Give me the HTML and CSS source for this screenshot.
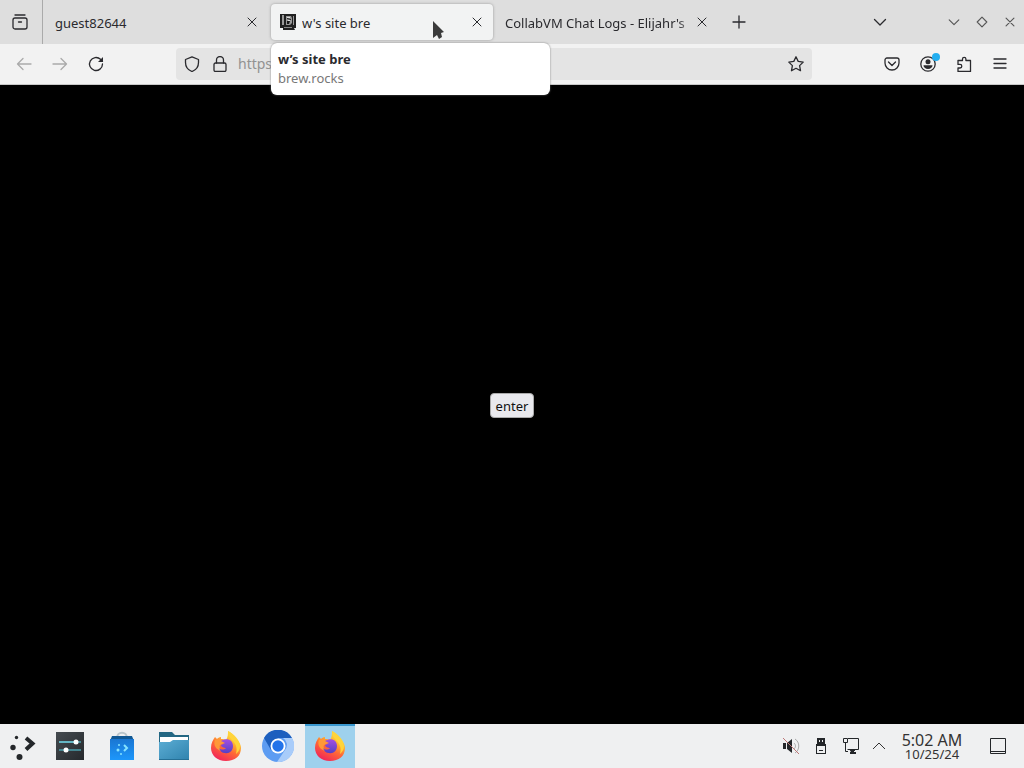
FILE: index.html
```html
<!DOCTYPE html>
<html lang="en">
<head>
<meta charset="utf-8">
<title>w's site bre</title>
<link rel="stylesheet" href="styles.css">
</head>
<body>
<svg class="defs" aria-hidden="true">
  <defs>
    <linearGradient id="flame" x1="0.8" y1="0" x2="0.25" y2="1">
      <stop offset="0" stop-color="#fff04a"/><stop offset="0.3" stop-color="#ffbd30"/><stop offset="0.58" stop-color="#ff6a35"/><stop offset="1" stop-color="#f0205c"/>
    </linearGradient>
    <linearGradient id="globe" x1="0" y1="0" x2="0" y2="1"><stop offset="0" stop-color="#a54fe0"/><stop offset="1" stop-color="#5440c4"/></linearGradient>
    <linearGradient id="bag" x1="0" y1="0" x2="0" y2="1"><stop offset="0" stop-color="#1a76d2"/><stop offset="1" stop-color="#1d97fb"/></linearGradient>
    <linearGradient id="folder" x1="0" y1="0" x2="1" y2="1"><stop offset="0" stop-color="#5cadd4"/><stop offset="1" stop-color="#2f83ae"/></linearGradient>
    <linearGradient id="slate" x1="0" y1="0" x2="1" y2="1"><stop offset="0" stop-color="#454b50"/><stop offset="1" stop-color="#25292d"/></linearGradient>
    <symbol id="firefox" viewBox="0 0 32 32">
      <path fill="url(#flame)" d="M18 1c4 2 5 4 6 7 4 2 7 6 7 10 0 8-6 13-15 13S1 25 1 18c0-5 2-8 4-11l2 2c1-1 2-2 4-2v2c2 0 4 0 5 1 2-3 2-6 2-9z"/>
      <path fill="#ff9838" d="M5 10c4-2 8 0 10 2l-5 3c-1 2 0 4 2 6-6-1-9-6-7-11z"/>
      <path fill="url(#globe)" d="M11 11c6-4 12-1 12 5 0 5-4 8-8 7-3 0-5-2-6-5 2 2 5 2 7 0-2 0-5-1-5-3l4-2z"/>
      <path fill="#ffd43a" d="M18 1c6 3 12 9 12 15 0 4-2 6-4 8 2-7-1-11-4-14-3-3-4-5-4-9z"/>
    </symbol>
    <symbol id="close" viewBox="0 0 16 16"><path d="M4 4l8 8M12 4l-8 8"/></symbol>
    <symbol id="chevron" viewBox="0 0 16 16"><path d="M2.500 5.500L8 11l5.500-5.500"/></symbol>
  </defs>
</svg>
<div class="desktop">
  <header class="tabbar">
    <button class="recent" aria-label="Firefox View"><svg class="icon" viewBox="0 0 16 16"><rect x="1" y="4" width="14" height="11" rx="2"/><path d="M3 1h10M6.500 8h3"/></svg></button>
    <div class="tabs" role="tablist">
      <div class="tab" role="tab" aria-selected="false"><span class="title">guest82644</span><button class="close" aria-label="Close guest82644"><svg class="icon"><use href="#close"/></svg></button></div>
      <div class="tab selected" role="tab" aria-selected="true">
        <svg class="favicon" viewBox="0 0 16 16"><path fill="#202020" d="M0 0h16v14h-2l1 2H3v-2H0z"/><path fill="#999" d="M2 1h2v10H2zM13 2h1v9h-1zM6 2h5l1 2v5l-2 2H6z"/><path fill="#181818" d="M7 4l4 1v1L7 5zM7 7h3l-1 3H7z"/><path fill="#ddd" d="M7 3h3v1H7zM8 6h2v1H8z"/><path fill="#888" d="M4 13h8v1H4z"/></svg>
        <span class="title">w's site bre</span><button class="close" aria-label="Close w's site bre"><svg class="icon"><use href="#close"/></svg></button>
        <div class="tooltip" role="tooltip"><strong>w’s site bre</strong><span>brew.rocks</span></div>
        <svg class="pointer" viewBox="0 0 12 20" aria-hidden="true"><path d="M1 1v17l4-3 2 4 3-2-1-4 3-1z"/></svg>
      </div>
      <div class="tab" role="tab" aria-selected="false"><span class="title fade">CollabVM Chat Logs - Elijahr's</span><button class="close" aria-label="Close CollabVM Chat Logs"><svg class="icon"><use href="#close"/></svg></button></div>
    </div>
    <button class="tool" aria-label="New tab"><svg class="icon" viewBox="0 0 16 16"><path d="M8 2v12M2 8h12"/></svg></button>
    <button class="tool listtabs" aria-label="List all tabs"><svg class="icon"><use href="#chevron"/></svg></button>
    <div class="windowbuttons">
      <button aria-label="Minimize"><svg class="icon" viewBox="0 0 16 16"><use href="#chevron"/></svg></button>
      <button aria-label="Maximize"><svg class="icon" viewBox="0 0 16 16"><path d="M8 2.500L13.500 8 8 13.500 2.500 8z"/></svg></button>
      <button aria-label="Close window"><svg class="icon" viewBox="0 0 16 16"><path d="M3.500 3.500l9 9M12.500 3.500l-9 9"/></svg></button>
    </div>
  </header>
  <nav class="toolbar" aria-label="Navigation">
    <button class="tool" disabled aria-label="Back"><svg class="icon" viewBox="0 0 16 16"><path d="M15 8H1.500M7 2.500L1.500 8 7 13.500"/></svg></button>
    <button class="tool" disabled aria-label="Forward"><svg class="icon" viewBox="0 0 16 16"><path d="M1 8h13.500M9 2.500L14.500 8 9 13.500"/></svg></button>
    <button class="tool" aria-label="Reload"><svg class="icon" viewBox="0 0 16 16"><path d="M14.500 8a6.500 6.500 0 1 1-2-4.700l2 2"/><path class="solid" d="M15 1v5h-5z"/></svg></button>
    <div class="urlbar">
      <button aria-label="Tracking protection"><svg class="icon" viewBox="0 0 16 16"><path d="M8 .800l6.500 2.700v3C14.500 11 12 14 8 15.500 4 14 1.500 11 1.500 6.500v-3z"/></svg></button>
      <button aria-label="Site security"><svg class="icon" viewBox="0 0 16 16"><rect x="2" y="7" width="12" height="8.500" rx="1.500"/><path d="M4.500 7V4a3.500 3.500 0 0 1 7 0v3"/></svg></button>
      <input type="text" value="https://brew.rocks" aria-label="Address">
      <button aria-label="Bookmark this page"><svg class="icon" viewBox="0 0 16 16"><path d="M8 .800l2.200 4.600 5 .700-3.600 3.500.900 5.100L8 12.300l-4.500 2.400.900-5.100L.800 6.100l5-.700z"/></svg></button>
    </div>
    <button class="tool" aria-label="Save to Pocket"><svg class="icon" viewBox="0 0 16 16"><path d="M3 2h10a2 2 0 0 1 2 2v3a7 7 0 0 1-14 0V4a2 2 0 0 1 2-2zM4.500 6L8 9.500 11.500 6"/></svg></button>
    <button class="tool account" aria-label="Account"><svg class="icon" viewBox="0 0 16 16"><circle cx="8" cy="8" r="7.200"/><circle class="solid" cx="8" cy="5.700" r="2.500"/><path class="solid" d="M3.500 9.300h9c0 2-1.700 3.700-4.500 3.700s-4.500-1.700-4.500-3.700z"/></svg><span class="badge"></span></button>
    <button class="tool" aria-label="Extensions"><svg class="icon" viewBox="0 0 16 16"><path d="M2 4.500h4.500V3a1.700 1.700 0 0 1 3.400 0v1.500H14.500v11H2V12h2a1.800 1.800 0 0 0 0-3.600H2z"/></svg></button>
    <button class="tool" aria-label="Application menu"><svg class="icon" viewBox="0 0 16 16"><path d="M2 3h12M2 7.500h12M2 12h12"/></svg></button>
  </nav>
  <main class="page"><button class="enter">enter</button></main>
  <footer class="taskbar">
    <button class="launcher" aria-label="Application launcher"><svg class="appicon" viewBox="0 0 32 32"><g fill="#24272a"><circle cx="10.500" cy="7.500" r="1.700"/><circle cx="7" cy="17.500" r="2.700"/><circle cx="13.500" cy="27" r="3"/></g><path d="M20 8l6.500 5.500L20 19.500" fill="none" stroke="#24272a" stroke-width="4"/></svg></button>
    <button class="app" aria-label="System Settings"><svg class="appicon" viewBox="0 0 32 32"><path fill="url(#slate)" d="M2 2h28v28H2z"/><path d="M5 12h22M5 20h22" stroke="#438590" stroke-width="2"/><path d="M5 12h16" stroke="#64b6c4" stroke-width="2"/><circle cx="22" cy="12" r="2.500" fill="#fff"/><circle cx="12" cy="20" r="2.500" fill="#fff"/></svg></button>
    <button class="app" aria-label="Discover"><svg class="appicon" viewBox="0 0 32 32"><path d="M11 8c0-7 10-7 10 0" fill="none" stroke="#bac5cb" stroke-width="2"/><path fill="#125994" d="M6 6h20l2 5H4z"/><path fill="url(#bag)" d="M4 9h24v21H4z"/><path d="M18 15l3 3-3 3" fill="none" stroke="#86e3ff" stroke-width="2"/><g fill="#86e3ff"><circle cx="13" cy="15" r="1"/><circle cx="12" cy="20" r="1.500"/><circle cx="15" cy="24" r="1"/></g></svg></button>
    <button class="app" aria-label="File manager"><svg class="appicon" viewBox="0 0 32 32"><path fill="#236783" d="M1 2h13l3 3h14v7H1z"/><path fill="#fff" d="M2 7h28v8H2z"/><path fill="url(#folder)" d="M1 12h11l3-2h16v20H1z"/><path fill="#256f95" d="M1 29h30v1H1z"/></svg></button>
    <button class="app" aria-label="Firefox"><svg class="appicon"><use href="#firefox"/></svg></button>
    <button class="app" aria-label="Chromium"><svg class="appicon" viewBox="0 0 32 32"><circle cx="16" cy="16" r="16" fill="#5d9cf2"/><path fill="#1d5fbe" d="M2 8a16 16 0 0 1 28 0H16l-7 12z"/><path fill="#a8ccfa" d="M30 8a16 16 0 0 1-15 24l8-12a8 8 0 0 0-2-12z"/><circle cx="16" cy="16" r="7.500" fill="#fff"/><circle cx="16" cy="16" r="5.700" fill="#2373e9"/></svg></button>
    <button class="app active" aria-label="Firefox, running"><svg class="appicon"><use href="#firefox"/></svg></button>
    <div class="tray">
      <button aria-label="Volume muted"><svg class="trayicon" viewBox="0 0 18 18"><path fill="#232629" d="M1 6h3v6H1zM5 6l5-4v14l-5-4z"/><path d="M12 6c2 2 2 4 0 6M13 2c5 3 5 11 0 14" fill="none" stroke="#aaa"/><path d="M1 1l16 16" stroke="#bd7777"/></svg></button>
      <button aria-label="Removable devices"><svg class="trayicon" viewBox="0 0 18 18"><path fill="#232629" d="M5 1h8v6H5zM4 7h10v10H4z"/><path fill="#eff0f1" d="M7 3h1v2H7zM10 3h1v2h-1zM5 9h8v7H5z"/><path d="M7 13.500h4" stroke="#232629"/></svg></button>
      <button aria-label="Network"><svg class="trayicon" viewBox="0 0 18 18"><path d="M6 1.500h10.500v11H5.500M1.500 1.500h4v4h-4zM3.500 6v8.500H6" fill="none" stroke="#232629"/><path fill="#232629" d="M7 12h6v2h-1v1h2v2H8v-2h1z"/></svg></button>
      <button class="expand" aria-label="Show hidden icons"><svg class="trayicon" viewBox="0 0 18 18"><path d="M3 12l6-6 6 6" fill="none" stroke="#333"/></svg></button>
      <button class="clock"><time class="time">5:02 AM</time><span class="date">10/25/24</span></button>
      <button class="showdesktop" aria-label="Show desktop"><svg class="trayicon" viewBox="0 0 18 18"><path d="M1.500 1.500h15v15h-15zM2 14.500h14" fill="none" stroke="#232629"/></svg></button>
    </div>
  </footer>
</div>
</body>
</html>
```
FILE: styles.css
```css
* { box-sizing: border-box; }
body { margin: 0; font: 13px/18px "Noto Sans", sans-serif; color: #2a2a2e; }
button { display: flex; align-items: center; justify-content: center; flex-shrink: 0; margin: 0; padding: 0; border: 0; background: none; color: inherit; font: inherit; }
.defs { position: absolute; width: 0; height: 0; }
.desktop { display: flex; flex-direction: column; min-height: 100vh; background: #000; }
.icon { width: 16px; height: 16px; fill: none; stroke: currentColor; stroke-width: 1.3; stroke-linecap: round; stroke-linejoin: round; }
.solid { fill: currentColor; stroke: none; }

.tabbar { display: flex; align-items: stretch; height: 44px; background: #dedede; }
.recent { width: 43px; padding-right: 2px; border-right: 1px solid #aaa; }
.tabs { display: flex; gap: 3px; min-width: 0; padding: 4px 3px; }
.tab { position: relative; display: flex; align-items: center; flex: 0 1 222px; width: 222px; min-width: 0; padding: 0 8px 0 9px; border-radius: 4px; }
.tab.selected { background: #f2f3f3; box-shadow: 0 0 3px #999; }
.title { flex: 1; min-width: 0; padding-top: 2px; overflow: hidden; white-space: nowrap; }
.fade { mask-image: linear-gradient(to left, transparent, #000 16px); }
.favicon { flex-shrink: 0; width: 16px; height: 16px; margin-right: 6px; }
.close { width: 16px; height: 32px; }
.close .icon { stroke-width: 1; }
.tooltip { position: absolute; z-index: 2; top: 39px; left: 0; display: flex; flex-direction: column; width: 279px; padding: 7px; border-radius: 6px; background: #fff; box-shadow: 0 0 2px #777; line-height: 19px; }
.tooltip span { color: #777; }
.pointer { position: absolute; z-index: 3; top: 16px; right: 49px; width: 12px; height: 20px; fill: #3b3b3b; }
.listtabs { margin-left: auto; margin-right: 42px; }
.windowbuttons { display: flex; }
.windowbuttons button { width: 28px; color: #555; }
.windowbuttons .icon { width: 14px; height: 14px; }

.toolbar { display: flex; align-items: center; height: 41px; padding: 0 6px; border-bottom: 1px solid #c8c8c8; background: #f2f2f2; }
.tool { width: 36px; }
.tool:disabled { color: #aaa; }
.urlbar { display: flex; align-items: center; flex: 1; min-width: 0; height: 32px; margin: 0 62px; padding: 0 2px; border-radius: 4px; background: #e4e4e4; }
.urlbar button { width: 28px; height: 32px; }
.urlbar input { flex: 1; min-width: 0; padding: 0 4px; border: 0; outline: 0; background: none; color: #929292; font: 14px/20px "Noto Sans", sans-serif; }
.account { position: relative; }
.badge { position: absolute; top: -3px; right: 6px; width: 8px; height: 8px; border-radius: 50%; background: #23aef0; }

.page { display: flex; flex: 1; align-items: center; justify-content: center; padding-top: 2px; background: #000; }
.enter { height: 25px; padding: 0 5px; border: 1px solid #aaa; border-radius: 4px; background: #e9e9ed; color: #111; }

.taskbar { display: flex; align-items: stretch; gap: 2px; height: 44px; background: #eff0f1; }
.launcher { width: 43px; }
.app { width: 50px; }
.app.active { border-top: 2px solid #3997ce; padding-bottom: 2px; background: #9ed1ed; }
.appicon { width: 32px; height: 32px; }
.tray { display: flex; margin-left: auto; }
.tray button { width: 30px; }
.trayicon { width: 18px; height: 18px; }
.tray .expand { width: 26px; }
.tray .clock { flex-direction: column; width: 80px; color: #333; }
.time { font-size: 16px; line-height: 16px; }
.date { font-size: 13px; line-height: 13px; }
.tray .showdesktop { width: 52px; }
```
